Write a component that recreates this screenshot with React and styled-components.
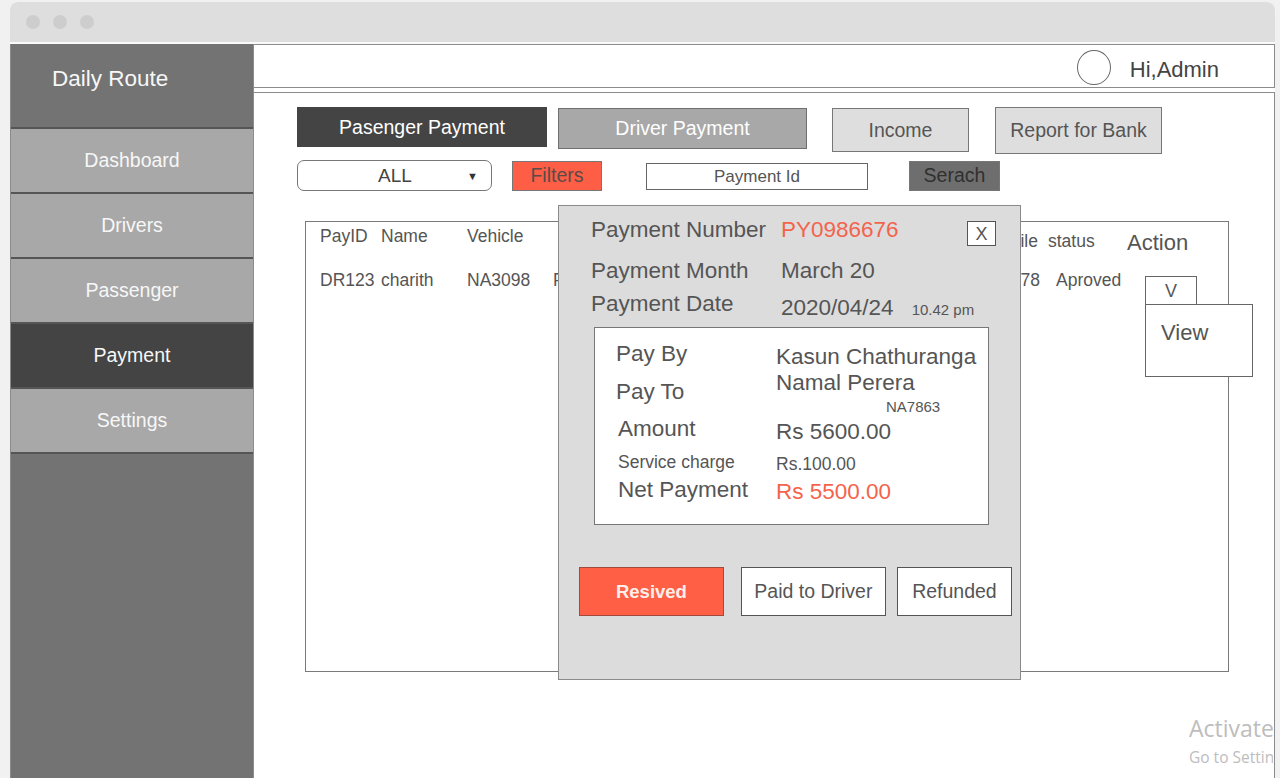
import React from "react";
import styled, { createGlobalStyle } from "styled-components";

const GlobalStyle = createGlobalStyle`
  html, body {
    margin: 0;
    padding: 0;
    background: #f1f1f1;
  }
  body {
    font-family: "Liberation Sans", Arial, sans-serif;
    color: #555;
    overflow: hidden;
  }
`;

const Window = styled.div`
  margin: 2px 0 0 10px;
  width: 1265px;
  height: 776px;
  display: flex;
  flex-direction: column;
  background: #fff;
  border-radius: 8px 8px 0 0;
  overflow: hidden;
`;

const TitleBar = styled.div`
  flex: none;
  height: 40px;
  background: #dedede;
  display: flex;
  align-items: center;
  gap: 13px;
  padding-left: 16px;
  border-bottom: 2px solid #fafafa;
`;

const Dot = styled.span`
  width: 14px;
  height: 14px;
  border-radius: 50%;
  background: #cdcdcd;
`;

const Body = styled.div`
  flex: 1;
  display: flex;
  min-height: 0;
`;

const Sidebar = styled.div`
  width: 243px;
  flex: none;
  box-sizing: border-box;
  background: #737373;
  border-left: 1px solid #8a8a8a;
  color: #f7f7f7;
`;

const Brand = styled.div`
  height: 83px;
  box-sizing: border-box;
  padding: 22px 0 0 41px;
  font-size: 22.5px;
  line-height: 26px;
`;

const NavItem = styled.div`
  height: 63px;
  border-top: 2px solid #555;
  background: ${(p) => (p.$active ? "#444" : "#a8a8a8")};
  display: flex;
  align-items: center;
  justify-content: center;
  font-size: 19.5px;
  &:last-child {
    border-bottom: 2px solid #555;
  }
`;

const Main = styled.div`
  flex: 1;
  position: relative;
  display: flex;
  flex-direction: column;
  overflow: hidden;
  border-left: 1px solid #8c8c8c;
`;

const TopBar = styled.div`
  flex: none;
  height: 44px;
  box-sizing: border-box;
  border: 1px solid #8c8c8c;
  border-left: none;
  display: flex;
  align-items: center;
  justify-content: flex-end;
  padding-right: 55px;
  margin-bottom: 4px;
`;

const Avatar = styled.span`
  width: 32px;
  height: 33px;
  border: 1px solid #666;
  border-radius: 50%;
  margin: 3px 19px 0 0;
`;

const Greeting = styled.span`
  font-size: 22px;
  color: #444;
  margin-top: 8px;
`;

const Panel = styled.div`
  flex: 1;
  border: 1px solid #8c8c8c;
  border-left: none;
  border-bottom: none;
  padding: 14px 0 0 43px;
`;

const TabRow = styled.div`
  display: flex;
  align-items: flex-start;
  height: 53px;
`;

const tabColors = {
  active: { bg: "#444", fg: "#fff", border: "#444" },
  mid: { bg: "#a8a8a8", fg: "#fff", border: "#6f6f6f" },
  light: { bg: "#dedede", fg: "#555", border: "#777" },
};

const Tab = styled.div`
  width: ${(p) => p.$w}px;
  height: ${(p) => p.$h}px;
  margin-left: ${(p) => p.$ml || 0}px;
  margin-top: ${(p) => p.$mt || 0}px;
  box-sizing: border-box;
  background: ${(p) => tabColors[p.$variant].bg};
  color: ${(p) => tabColors[p.$variant].fg};
  border: 1px solid ${(p) => tabColors[p.$variant].border};
  display: flex;
  align-items: center;
  justify-content: center;
  font-size: 19.5px;
`;

const FilterRow = styled.div`
  display: flex;
  align-items: center;
  height: 31px;
`;

const Select = styled.div`
  width: 195px;
  height: 31px;
  box-sizing: border-box;
  border: 1px solid #777;
  border-radius: 7px;
  display: flex;
  align-items: center;
  font-size: 19px;
  color: #444;
  padding-left: 80px;
  span {
    margin-left: auto;
    margin-right: 13px;
    font-size: 11px;
    color: #333;
  }
`;

const FilterButton = styled.div`
  width: ${(p) => p.$w}px;
  height: 30px;
  margin-left: ${(p) => p.$ml}px;
  box-sizing: border-box;
  background: ${(p) => p.$bg};
  color: ${(p) => p.$fg};
  border: 1px solid #777;
  display: flex;
  align-items: center;
  justify-content: center;
  font-size: 19.5px;
`;

const SearchInput = styled.div`
  width: 222px;
  height: 27px;
  margin: 2px 0 0 44px;
  box-sizing: border-box;
  border: 1px solid #666;
  display: flex;
  align-items: center;
  justify-content: center;
  font-size: 17px;
  color: #555;
`;

const TableBox = styled.div`
  width: 924px;
  height: 451px;
  margin: 30px 0 0 8px;
  box-sizing: border-box;
  border: 1px solid #7a7a7a;
  padding: 4px 0 0 14px;
`;

const TableRow = styled.div`
  display: grid;
  grid-template-columns: 61px 86px 86px 387px 108px 79px 1fr;
  align-items: start;
  height: ${(p) => p.$h}px;
  font-size: 17.5px;
  line-height: 20px;
  color: #555;
`;

const Cell = styled.div`
  margin-top: ${(p) => p.$mt || 0}px;
  padding-left: ${(p) => p.$pl || 0}px;
  padding-right: ${(p) => p.$pr || 0}px;
  text-align: ${(p) => p.$align || "left"};
  font-size: ${(p) => (p.$big ? "22px" : "inherit")};
  line-height: ${(p) => (p.$big ? "25px" : "inherit")};
  white-space: nowrap;
`;

const ActionBox = styled.div`
  position: relative;
  width: 52px;
  height: 29px;
  margin: 6px 0 0 18px;
  box-sizing: border-box;
  border: 1px solid #666;
  background: #fff;
  display: flex;
  align-items: center;
  justify-content: center;
  font-size: 18px;
`;

const ActionMenu = styled.div`
  position: absolute;
  top: 27px;
  left: -1px;
  width: 108px;
  height: 73px;
  box-sizing: border-box;
  border: 1px solid #666;
  background: #fff;
  padding: 15px 0 0 15px;
  font-size: 22px;
  line-height: 25px;
  z-index: 2;
`;

const Modal = styled.div`
  position: absolute;
  left: 304px;
  top: 161px;
  width: 463px;
  height: 475px;
  box-sizing: border-box;
  background: #dcdcdc;
  border: 1px solid #8a8a8a;
  padding: 11px 8px 0 20px;
  z-index: 3;
`;

const InfoRow = styled.div`
  display: flex;
  align-items: flex-start;
  margin-top: ${(p) => p.$mt || 0}px;
  padding: 0 16px 0 12px;
  font-size: 22.5px;
  line-height: 26px;
`;

const InfoLabel = styled.div`
  width: 190px;
  flex: none;
`;

const InfoValue = styled.div`
  margin-top: ${(p) => p.$mt || 0}px;
  color: ${(p) => (p.$accent ? "#f4634c" : "#555")};
  white-space: nowrap;
`;

const SmallNote = styled.span`
  font-size: 15px;
  margin-left: 18px;
`;

const CloseButton = styled.div`
  margin: 4px 0 0 auto;
  width: 29px;
  height: 25px;
  box-sizing: border-box;
  border: 1px solid #555;
  background: #fff;
  display: flex;
  align-items: center;
  justify-content: center;
  font-size: 18px;
  line-height: 18px;
`;

const DetailBox = styled.div`
  margin: 4px 0 0 15px;
  width: 395px;
  height: 198px;
  box-sizing: border-box;
  background: #fff;
  border: 1px solid #777;
  display: flex;
`;

const DetailCol = styled.div`
  width: ${(p) => (p.$w ? `${p.$w}px` : "auto")};
  flex: ${(p) => (p.$w ? "none" : 1)};
  box-sizing: border-box;
  padding: ${(p) => p.$pt}px 0 0 ${(p) => p.$pl || 0}px;
  display: flex;
  flex-direction: column;
`;

const DetailItem = styled.div`
  height: ${(p) => p.$h}px;
  display: flex;
  align-items: center;
  padding-left: ${(p) => p.$indent || 0}px;
  font-size: ${(p) => p.$size || 22.5}px;
  color: ${(p) => (p.$accent ? "#f4634c" : "#555")};
  white-space: nowrap;
`;

const ButtonRow = styled.div`
  display: flex;
  margin-top: 42px;
`;

const StatusButton = styled.div`
  width: ${(p) => p.$w}px;
  height: 49px;
  margin-left: ${(p) => p.$ml || 0}px;
  box-sizing: border-box;
  background: ${(p) => (p.$primary ? "#ff5f45" : "#fff")};
  border: 1px solid ${(p) => (p.$primary ? "#a0493c" : "#555")};
  color: ${(p) => (p.$primary ? "#fdeeea" : "#555")};
  font-weight: ${(p) => (p.$primary ? "bold" : "normal")};
  font-size: ${(p) => (p.$primary ? "18.5px" : "19.5px")};
  display: flex;
  align-items: center;
  justify-content: center;
`;

const Watermark = styled.div`
  position: absolute;
  left: 935px;
  top: 670px;
  width: 84px;
  overflow: hidden;
  font-family: "Open Sans", "Noto Sans", sans-serif;
  color: #bdbdbd;
  white-space: nowrap;
  div:first-child {
    font-size: 23px;
    line-height: 28px;
  }
  div:last-child {
    font-size: 15.5px;
    line-height: 22px;
    margin-top: 4px;
  }
`;

const navItems = ["Dashboard", "Drivers", "Passenger", "Payment", "Settings"];

export default function App() {
  return (
    <>
      <GlobalStyle />
      <Window>
        <TitleBar>
          <Dot />
          <Dot />
          <Dot />
        </TitleBar>
        <Body>
          <Sidebar>
            <Brand>Daily Route</Brand>
            {navItems.map((item) => (
              <NavItem key={item} $active={item === "Payment"}>
                {item}
              </NavItem>
            ))}
          </Sidebar>
          <Main>
            <TopBar>
              <Avatar />
              <Greeting>Hi,Admin</Greeting>
            </TopBar>
            <Panel>
              <TabRow>
                <Tab $w={250} $h={40} $variant="active">Pasenger Payment</Tab>
                <Tab $w={249} $h={41} $ml={11} $mt={1} $variant="mid">Driver Payment</Tab>
                <Tab $w={137} $h={44} $ml={25} $mt={1} $variant="light">Income</Tab>
                <Tab $w={167} $h={47} $ml={26} $variant="light">Report for Bank</Tab>
              </TabRow>
              <FilterRow>
                <Select>
                  ALL<span>▼</span>
                </Select>
                <FilterButton $w={90} $ml={20} $bg="#fd5e45" $fg="#5a4b48">Filters</FilterButton>
                <SearchInput>Payment Id</SearchInput>
                <FilterButton $w={91} $ml={41} $bg="#6e6e6e" $fg="#303030">Serach</FilterButton>
              </FilterRow>
              <TableBox>
                <TableRow $h={44}>
                  <Cell>PayID</Cell>
                  <Cell>Name</Cell>
                  <Cell>Vehicle</Cell>
                  <Cell />
                  <Cell $align="right" $pr={10} $mt={5}>Mobile</Cell>
                  <Cell $mt={5}>status</Cell>
                  <Cell $big $mt={4}>Action</Cell>
                </TableRow>
                <TableRow $h={60}>
                  <Cell>DR123</Cell>
                  <Cell>charith</Cell>
                  <Cell>NA3098</Cell>
                  <Cell>Fort</Cell>
                  <Cell $align="right" $pr={8}>0771234578</Cell>
                  <Cell $pl={8}>Aproved</Cell>
                  <Cell>
                    <ActionBox>
                      V
                      <ActionMenu>View</ActionMenu>
                    </ActionBox>
                  </Cell>
                </TableRow>
              </TableBox>
            </Panel>

            <Modal>
              <InfoRow>
                <InfoLabel>Payment Number</InfoLabel>
                <InfoValue $accent>PY0986676</InfoValue>
                <CloseButton>X</CloseButton>
              </InfoRow>
              <InfoRow $mt={12}>
                <InfoLabel>Payment Month</InfoLabel>
                <InfoValue>March 20</InfoValue>
              </InfoRow>
              <InfoRow $mt={7}>
                <InfoLabel>Payment Date</InfoLabel>
                <InfoValue $mt={4}>
                  2020/04/24<SmallNote>10.42 pm</SmallNote>
                </InfoValue>
              </InfoRow>
              <DetailBox>
                <DetailCol $w={181} $pt={7} $pl={21}>
                  <DetailItem $h={38}>Pay By</DetailItem>
                  <DetailItem $h={37}>Pay To</DetailItem>
                  <DetailItem $h={37} $indent={2}>Amount</DetailItem>
                  <DetailItem $h={30} $indent={2} $size={17.5}>Service charge</DetailItem>
                  <DetailItem $h={26} $indent={2}>Net Payment</DetailItem>
                </DetailCol>
                <DetailCol $pt={15}>
                  <DetailItem $h={28}>Kasun Chathuranga</DetailItem>
                  <DetailItem $h={24}>Namal Perera</DetailItem>
                  <DetailItem $h={22} $indent={110} $size={15}>NA7863</DetailItem>
                  <DetailItem $h={30}>Rs 5600.00</DetailItem>
                  <DetailItem $h={34} $size={17.5}>Rs.100.00</DetailItem>
                  <DetailItem $h={22} $accent>Rs 5500.00</DetailItem>
                </DetailCol>
              </DetailBox>
              <ButtonRow>
                <StatusButton $w={146} $primary>Resived</StatusButton>
                <StatusButton $w={146} $ml={17}>Paid to Driver</StatusButton>
                <StatusButton $w={116} $ml={11}>Refunded</StatusButton>
              </ButtonRow>
            </Modal>

            <Watermark>
              <div>Activate Windows</div>
              <div>Go to Settings to activate Windows.</div>
            </Watermark>
          </Main>
        </Body>
      </Window>
    </>
  );
}
